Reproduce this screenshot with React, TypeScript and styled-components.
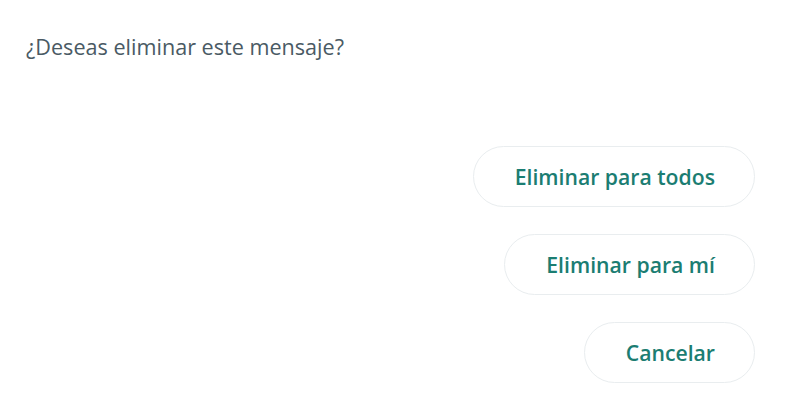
import React from 'react'
import styled, { createGlobalStyle } from 'styled-components'

const GlobalStyle = createGlobalStyle`
    html, body {
        margin: 0;
        padding: 0;
        background: #ffffff;
    }
    body {
        font-family: "Open Sans", "Liberation Sans", sans-serif;
    }
`

const Dialog = styled.div`
    width: 800px;
    height: 414px;
    box-sizing: border-box;
    padding: 29px 45px 0 26px;
    display: flex;
    flex-direction: column;
`

const Message = styled.p`
    margin: 0;
    font-size: 21.6px;
    line-height: 35px;
    color: #4a5a64;
`

const Actions = styled.div`
    margin-top: 82px;
    display: flex;
    flex-direction: column;
    align-items: flex-end;
    gap: 27px;
`

const ActionButton = styled.button`
    height: 61px;
    box-sizing: border-box;
    padding: 0 39px 0 41px;
    border: 1.5px solid #e9edef;
    border-radius: 31px;
    background: #ffffff;
    color: #1b7d72;
    font-family: "Open Sans", "Liberation Sans", sans-serif;
    font-size: 21.2px;
    font-weight: 600;
    cursor: pointer;
`

const actions = ['Eliminar para todos', 'Eliminar para mí', 'Cancelar']

export default function App() {
    return (
        <>
            <GlobalStyle />
            <Dialog>
                <Message>¿Deseas eliminar este mensaje?</Message>
                <Actions>
                    {actions.map((label) => (
                        <ActionButton key={label}>{label}</ActionButton>
                    ))}
                </Actions>
            </Dialog>
        </>
    )
}
